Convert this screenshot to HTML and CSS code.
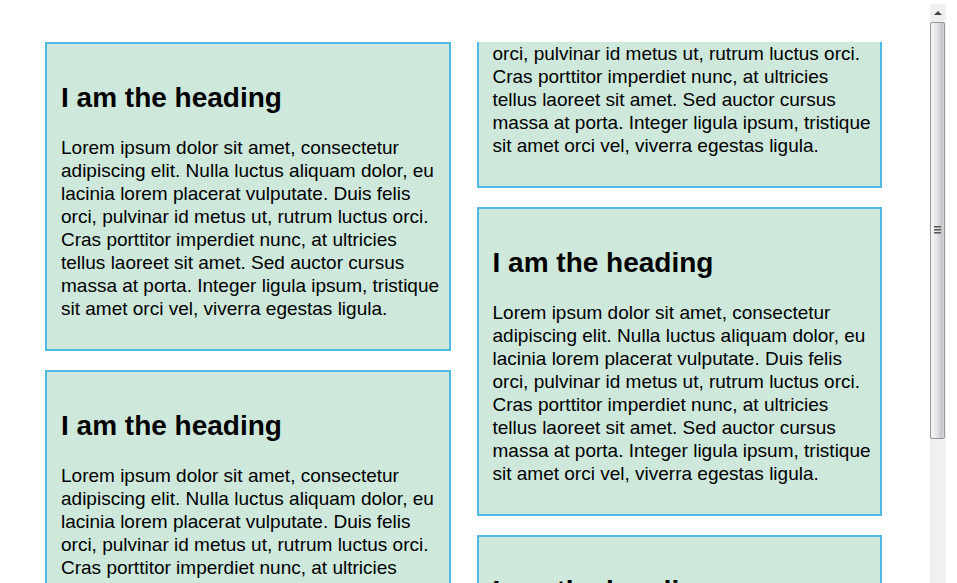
FILE: index.html
```html
<!DOCTYPE html>
<html lang="en">
<head>
<meta charset="utf-8">
<title>Two column cards</title>
<link rel="stylesheet" href="styles.css">
</head>
<body>
<main class="columns">
  <div class="column">
    <article class="card">
      <h2>I am the heading</h2>
      <p>Lorem ipsum dolor sit amet, consectetur adipiscing elit. Nulla luctus aliquam dolor, eu lacinia lorem placerat vulputate. Duis felis orci, pulvinar id metus ut, rutrum luctus orci. Cras porttitor imperdiet nunc, at ultricies tellus laoreet sit amet. Sed auctor cursus massa at porta. Integer ligula ipsum, tristique sit amet orci vel, viverra egestas ligula.</p>
    </article>
    <article class="card">
      <h2>I am the heading</h2>
      <p>Lorem ipsum dolor sit amet, consectetur adipiscing elit. Nulla luctus aliquam dolor, eu lacinia lorem placerat vulputate. Duis felis orci, pulvinar id metus ut, rutrum luctus orci. Cras porttitor imperdiet nunc, at ultricies tellus laoreet sit amet. Sed auctor cursus massa at porta. Integer ligula ipsum, tristique sit amet orci vel, viverra egestas ligula.</p>
    </article>
  </div>
  <div class="column">
    <article class="card card-continued">
      <p>orci, pulvinar id metus ut, rutrum luctus orci. Cras porttitor imperdiet nunc, at ultricies tellus laoreet sit amet. Sed auctor cursus massa at porta. Integer ligula ipsum, tristique sit amet orci vel, viverra egestas ligula.</p>
    </article>
    <article class="card">
      <h2>I am the heading</h2>
      <p>Lorem ipsum dolor sit amet, consectetur adipiscing elit. Nulla luctus aliquam dolor, eu lacinia lorem placerat vulputate. Duis felis orci, pulvinar id metus ut, rutrum luctus orci. Cras porttitor imperdiet nunc, at ultricies tellus laoreet sit amet. Sed auctor cursus massa at porta. Integer ligula ipsum, tristique sit amet orci vel, viverra egestas ligula.</p>
    </article>
    <article class="card">
      <h2>I am the heading</h2>
    </article>
  </div>
</main>
<div class="scrollbar" aria-hidden="true">
  <svg class="arrow" viewBox="0 0 16 18" width="16" height="18"><path d="M4 11 L8 7 L12 11 Z" fill="#444"/></svg>
  <div class="thumb"><span class="grip"></span></div>
</div>
</body>
</html>
```
FILE: styles.css
```css
* {
  box-sizing: border-box;
}

body {
  margin: 0;
  height: 100vh;
  overflow: hidden;
  display: flex;
  background: #fff;
  color: #000;
  font-family: Arial, "Liberation Sans", sans-serif;
  font-size: 19px;
  line-height: 23px;
}

.columns {
  flex: 1;
  display: grid;
  grid-template-columns: 1fr 1fr;
  align-items: start;
  gap: 26px;
  padding: 42px 48px 0 45px;
}

.column {
  display: grid;
  gap: 19px;
}

.card {
  padding: 37px 4px 29px 14px;
  border: 2px solid #4fb8e3;
  background: #cee8dc;
}

.card-continued {
  padding-top: 0;
  border-top: 0;
}

h2 {
  margin: 0 0 21px;
  font-size: 28px;
  line-height: 34px;
}

p {
  margin: 0;
}

.scrollbar {
  width: 16px;
  margin: 4px 11px 0 0;
  display: flex;
  flex-direction: column;
  background: #f0f0f0;
}

.arrow {
  flex: none;
}

.thumb {
  width: 15px;
  height: 72%;
  display: flex;
  align-items: center;
  justify-content: center;
  border: 1px solid #979797;
  border-radius: 2px;
  background: linear-gradient(to right, #f6f6f6, #e6e6e9 45%, #c4c5c9 85%, #dcdcde);
}

.grip {
  width: 7px;
  height: 8px;
  background: repeating-linear-gradient(#555 0 1px, #999 1px 2px, transparent 2px 3px);
}
```
